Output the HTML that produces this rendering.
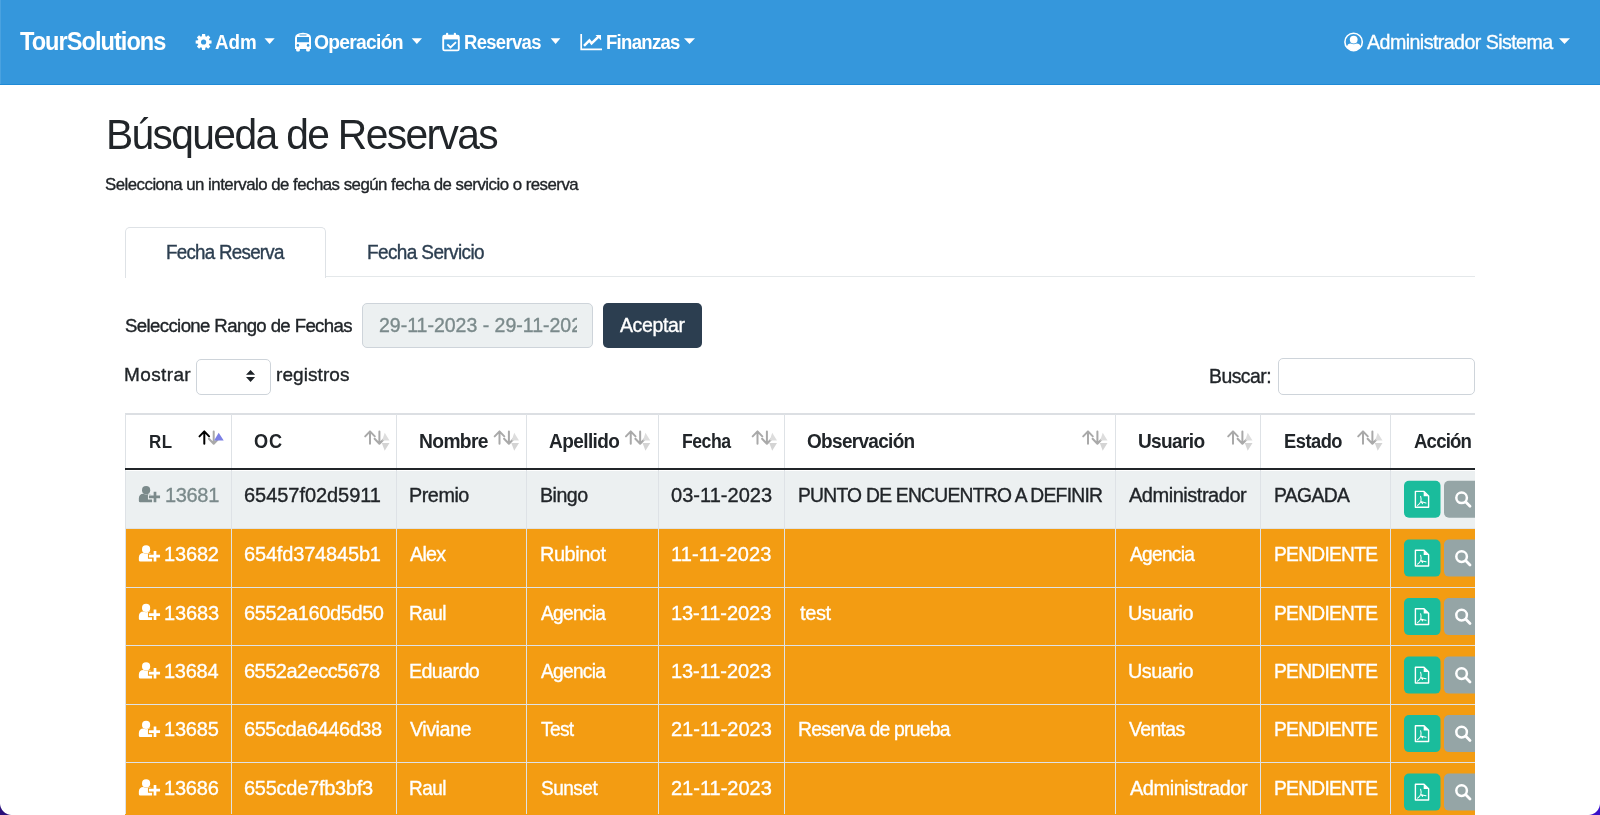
<!DOCTYPE html>
<html lang="es"><head><meta charset="utf-8"><title>Búsqueda de Reservas</title>
<style>
html,body{margin:0;padding:0}
body{width:1600px;height:815px;overflow:hidden;position:relative;background:#fff;font-family:"Liberation Sans",sans-serif}
.t{position:absolute;white-space:nowrap;line-height:1;will-change:transform}
.b{position:absolute}
</style></head><body>

<div class="b" style="left:0;top:0;width:1600px;height:84px;background:#3597dc"></div>
<div class="b" style="left:0;top:84px;width:1600px;height:1px;background:#1f8ad6"></div>
<div class="b" style="left:0;top:0;width:1px;height:84px;background:#4aa2e0"></div>
<div class="b" style="left:125px;top:276px;width:1350px;height:1px;background:#e4e8ea"></div>
<div class="b" style="left:125px;top:227px;width:199px;height:50px;border:1px solid #dee2e6;border-bottom:none;border-radius:5px 5px 0 0;background:#fff"></div>
<div class="b" style="left:362px;top:302.5px;width:229px;height:43px;border:1px solid #ced4da;border-radius:5px;background:#ecf0f1;overflow:hidden"></div>
<div class="b" style="left:603px;top:302.5px;width:98.5px;height:45.5px;border-radius:5px;background:#2c3e50"></div>
<div class="b" style="left:196px;top:358.5px;width:73px;height:34px;border:1px solid #ced4da;border-radius:5px;background:#fff"></div>
<div class="b" style="left:1278px;top:358px;width:195px;height:35px;border:1px solid #ced4da;border-radius:5px;background:#fff"></div>
<div class="b" style="left:125px;top:412px;width:1350px;height:403px;overflow:hidden">
<div class="b" style="left:0px;top:59px;width:1350px;height:57px;background:#ecf0f1"></div>
<div class="b" style="left:0px;top:117px;width:1350px;height:58px;background:#f39c12"></div>
<div class="b" style="left:0px;top:176px;width:1350px;height:57px;background:#f39c12"></div>
<div class="b" style="left:0px;top:234px;width:1350px;height:58px;background:#f39c12"></div>
<div class="b" style="left:0px;top:293px;width:1350px;height:57px;background:#f39c12"></div>
<div class="b" style="left:0px;top:351px;width:1350px;height:58px;background:#f39c12"></div>
<div class="b" style="left:0px;top:1px;width:1350px;height:2px;background:#dcdfe3"></div>
<div class="b" style="left:0px;top:2px;width:1px;height:400px;background:#dee2e6"></div>
<div class="b" style="left:106px;top:2px;width:1px;height:400px;background:#dee2e6"></div>
<div class="b" style="left:271px;top:2px;width:1px;height:400px;background:#dee2e6"></div>
<div class="b" style="left:401px;top:2px;width:1px;height:400px;background:#dee2e6"></div>
<div class="b" style="left:533px;top:2px;width:1px;height:400px;background:#dee2e6"></div>
<div class="b" style="left:659px;top:2px;width:1px;height:400px;background:#dee2e6"></div>
<div class="b" style="left:990px;top:2px;width:1px;height:400px;background:#dee2e6"></div>
<div class="b" style="left:1135px;top:2px;width:1px;height:400px;background:#dee2e6"></div>
<div class="b" style="left:1265px;top:2px;width:1px;height:400px;background:#dee2e6"></div>
<div class="b" style="left:0px;top:116px;width:1350px;height:1px;background:#dee2e6"></div>
<div class="b" style="left:0px;top:175px;width:1350px;height:1px;background:#dee2e6"></div>
<div class="b" style="left:0px;top:233px;width:1350px;height:1px;background:#dee2e6"></div>
<div class="b" style="left:0px;top:292px;width:1350px;height:1px;background:#dee2e6"></div>
<div class="b" style="left:0px;top:350px;width:1350px;height:1px;background:#dee2e6"></div>
<div class="b" style="left:0px;top:56px;width:1350px;height:2px;background:#212529"></div>
</div>
<span class="t" style="left:20.31px;top:31.107px;font-size:23.59px;font-weight:bold;color:#ffffff;letter-spacing:-0.970px;transform-origin:0 19.97px;transform:scaleY(1.100)">TourSolutions</span>
<span class="t" style="left:214.50px;top:34.071px;font-size:18.78px;font-weight:bold;color:#ffffff;letter-spacing:-0.048px;transform-origin:0 15.90px;transform:scaleY(1.065)">Adm</span>
<span class="t" style="left:313.60px;top:33.017px;font-size:19.31px;font-weight:bold;color:#ffffff;letter-spacing:-0.743px;transform-origin:0 16.35px;transform:scaleY(1.036)">Operación</span>
<span class="t" style="left:464.36px;top:34.064px;font-size:18.42px;font-weight:bold;color:#ffffff;letter-spacing:-0.633px;transform-origin:0 15.59px;transform:scaleY(1.086)">Reservas</span>
<span class="t" style="left:605.62px;top:34.063px;font-size:18.55px;font-weight:bold;color:#ffffff;letter-spacing:-0.695px;transform-origin:0 15.70px;transform:scaleY(1.078)">Finanzas</span>
<span class="t" style="left:1367.18px;top:33.007px;font-size:19.66px;font-weight:normal;color:#ffffff;letter-spacing:-0.576px;transform-origin:0 16.64px;transform:scaleY(1.007);-webkit-text-stroke:0.35px #ffffff">Administrador Sistema</span>
<span class="t" style="left:106.05px;top:115.019px;font-size:40.75px;font-weight:normal;color:#212529;letter-spacing:-1.636px;transform-origin:0 34.49px;transform:scaleY(1.031)">Búsqueda de Reservas</span>
<span class="t" style="left:105.33px;top:177.035px;font-size:16.83px;font-weight:normal;color:#212529;letter-spacing:-0.520px;transform-origin:0 14.25px;transform:scaleY(1.022);-webkit-text-stroke:0.35px #212529">Selecciona un intervalo de fechas según fecha de servicio o reserva</span>
<span class="t" style="left:166.23px;top:244.036px;font-size:18.77px;font-weight:normal;color:#2c3e50;letter-spacing:-0.735px;transform-origin:0 15.89px;transform:scaleY(1.028);-webkit-text-stroke:0.35px #2c3e50">Fecha Reserva</span>
<span class="t" style="left:366.99px;top:243.005px;font-size:18.99px;font-weight:normal;color:#2c3e50;letter-spacing:-0.611px;transform-origin:0 16.08px;transform:scaleY(1.016);-webkit-text-stroke:0.35px #2c3e50">Fecha Servicio</span>
<span class="t" style="left:124.52px;top:317.023px;font-size:18.6px;font-weight:normal;color:#212529;letter-spacing:-0.614px;transform-origin:0 15.74px;transform:scaleY(1.022);-webkit-text-stroke:0.35px #212529">Seleccione Rango de Fechas</span>
<span class="t" style="left:620.14px;top:316.015px;font-size:19.5px;font-weight:normal;color:#ffffff;letter-spacing:-0.388px;transform-origin:0 16.51px;-webkit-text-stroke:0.35px #ffffff">Aceptar</span>
<span class="t" style="left:124.34px;top:365.010px;font-size:19px;font-weight:normal;color:#212529;letter-spacing:0.381px;transform-origin:0 16.08px;-webkit-text-stroke:0.35px #212529">Mostrar</span>
<span class="t" style="left:275.57px;top:365.010px;font-size:19px;font-weight:normal;color:#212529;letter-spacing:0.072px;transform-origin:0 16.08px;-webkit-text-stroke:0.35px #212529">registros</span>
<span class="t" style="left:1208.50px;top:367.008px;font-size:19.38px;font-weight:normal;color:#212529;letter-spacing:-0.517px;transform-origin:0 16.41px;transform:scaleY(1.006);-webkit-text-stroke:0.35px #212529">Buscar:</span>
<span class="t" style="left:148.55px;top:435.141px;font-size:16.96px;font-weight:bold;color:#212529;letter-spacing:0.451px;transform-origin:0 14.36px;transform:scaleY(1.100)">RL</span>
<span class="t" style="left:254.00px;top:433.032px;font-size:18.15px;font-weight:bold;color:#212529;letter-spacing:0.954px;transform-origin:0 15.36px;transform:scaleY(1.080)">OC</span>
<span class="t" style="left:418.81px;top:432.008px;font-size:19.25px;font-weight:bold;color:#212529;letter-spacing:-0.640px;transform-origin:0 16.30px;transform:scaleY(1.018)">Nombre</span>
<span class="t" style="left:549.25px;top:432.005px;font-size:18.98px;font-weight:bold;color:#212529;letter-spacing:-0.553px;transform-origin:0 16.07px;transform:scaleY(1.033)">Apellido</span>
<span class="t" style="left:681.58px;top:434.109px;font-size:17.68px;font-weight:bold;color:#212529;letter-spacing:-0.500px;transform-origin:0 14.97px;transform:scaleY(1.100)">Fecha</span>
<span class="t" style="left:807.25px;top:432.013px;font-size:18.99px;font-weight:bold;color:#212529;letter-spacing:-0.680px;transform-origin:0 16.08px;transform:scaleY(1.032)">Observación</span>
<span class="t" style="left:1138.22px;top:432.014px;font-size:19.09px;font-weight:bold;color:#212529;letter-spacing:-0.657px;transform-origin:0 16.16px;transform:scaleY(1.027)">Usuario</span>
<span class="t" style="left:1283.76px;top:433.047px;font-size:18.31px;font-weight:bold;color:#212529;letter-spacing:-0.499px;transform-origin:0 15.50px;transform:scaleY(1.070)">Estado</span>
<div class="b" style="left:1391px;top:414px;width:84px;height:54px;overflow:hidden"><span class="t" style="left:1414.00px;top:433.055px;font-size:18.64px;font-weight:bold;color:#212529;letter-spacing:-0.839px;transform-origin:0 15.78px;transform:translate(-1391px,-414px) scaleY(1.052)">Acción</span></div>
<span class="t" style="left:164.68px;top:485.007px;font-size:20.0px;font-weight:normal;color:#7b8a8b;letter-spacing:-0.334px;transform-origin:0 16.93px;-webkit-text-stroke:0.35px #7b8a8b">13681</span>
<span class="t" style="left:243.74px;top:485.007px;font-size:20.0px;font-weight:normal;color:#212529;letter-spacing:-0.047px;transform-origin:0 16.93px;-webkit-text-stroke:0.35px #212529">65457f02d5911</span>
<span class="t" style="left:409.17px;top:486.020px;font-size:19.8px;font-weight:normal;color:#212529;letter-spacing:-0.458px;transform-origin:0 16.76px;transform:scaleY(1.010);-webkit-text-stroke:0.35px #212529">Premio</span>
<span class="t" style="left:539.70px;top:486.026px;font-size:19.61px;font-weight:normal;color:#212529;letter-spacing:-0.511px;transform-origin:0 16.60px;transform:scaleY(1.020);-webkit-text-stroke:0.35px #212529">Bingo</span>
<span class="t" style="left:671.00px;top:485.007px;font-size:20.0px;font-weight:normal;color:#212529;letter-spacing:0.034px;transform-origin:0 16.93px;-webkit-text-stroke:0.35px #212529">03-11-2023</span>
<span class="t" style="left:797.79px;top:486.016px;font-size:19.27px;font-weight:normal;color:#212529;letter-spacing:-0.746px;transform-origin:0 16.31px;transform:scaleY(1.038);-webkit-text-stroke:0.35px #212529">PUNTO DE ENCUENTRO A DEFINIR</span>
<span class="t" style="left:1129.40px;top:485.007px;font-size:20.0px;font-weight:normal;color:#212529;letter-spacing:-0.471px;transform-origin:0 16.93px;-webkit-text-stroke:0.35px #212529">Administrador</span>
<span class="t" style="left:1274.01px;top:486.023px;font-size:19.34px;font-weight:normal;color:#212529;letter-spacing:-0.651px;transform-origin:0 16.37px;transform:scaleY(1.034);-webkit-text-stroke:0.35px #212529">PAGADA</span>
<span class="t" style="left:164.35px;top:544.007px;font-size:20.0px;font-weight:normal;color:#ffffff;letter-spacing:-0.164px;transform-origin:0 16.93px;-webkit-text-stroke:0.35px #ffffff">13682</span>
<span class="t" style="left:243.76px;top:544.007px;font-size:20.0px;font-weight:normal;color:#ffffff;letter-spacing:-0.170px;transform-origin:0 16.93px;-webkit-text-stroke:0.35px #ffffff">654fd374845b1</span>
<span class="t" style="left:410.43px;top:545.014px;font-size:19.64px;font-weight:normal;color:#ffffff;letter-spacing:-0.666px;transform-origin:0 16.63px;transform:scaleY(1.018);-webkit-text-stroke:0.35px #ffffff">Alex</span>
<span class="t" style="left:539.80px;top:545.011px;font-size:19.94px;font-weight:normal;color:#ffffff;letter-spacing:-0.461px;transform-origin:0 16.88px;-webkit-text-stroke:0.35px #ffffff">Rubinot</span>
<span class="t" style="left:670.85px;top:544.007px;font-size:20.0px;font-weight:normal;color:#ffffff;letter-spacing:0.103px;transform-origin:0 16.93px;-webkit-text-stroke:0.35px #ffffff">11-11-2023</span>
<span class="t" style="left:1129.73px;top:545.022px;font-size:19.12px;font-weight:normal;color:#ffffff;letter-spacing:-0.690px;transform-origin:0 16.19px;transform:scaleY(1.046);-webkit-text-stroke:0.35px #ffffff">Agencia</span>
<span class="t" style="left:1274.22px;top:545.024px;font-size:19.22px;font-weight:normal;color:#ffffff;letter-spacing:-0.741px;transform-origin:0 16.27px;transform:scaleY(1.041);-webkit-text-stroke:0.35px #ffffff">PENDIENTE</span>
<span class="t" style="left:164.35px;top:603.007px;font-size:20.0px;font-weight:normal;color:#ffffff;letter-spacing:-0.114px;transform-origin:0 16.93px;-webkit-text-stroke:0.35px #ffffff">13683</span>
<span class="t" style="left:243.76px;top:603.007px;font-size:20.0px;font-weight:normal;color:#ffffff;letter-spacing:-0.384px;transform-origin:0 16.93px;-webkit-text-stroke:0.35px #ffffff">6552a160d5d50</span>
<span class="t" style="left:409.02px;top:604.011px;font-size:18.98px;font-weight:normal;color:#ffffff;letter-spacing:-0.480px;transform-origin:0 16.07px;transform:scaleY(1.054);-webkit-text-stroke:0.35px #ffffff">Raul</span>
<span class="t" style="left:540.98px;top:604.022px;font-size:19.12px;font-weight:normal;color:#ffffff;letter-spacing:-0.690px;transform-origin:0 16.19px;transform:scaleY(1.046);-webkit-text-stroke:0.35px #ffffff">Agencia</span>
<span class="t" style="left:670.85px;top:603.007px;font-size:20.0px;font-weight:normal;color:#ffffff;letter-spacing:-0.061px;transform-origin:0 16.93px;-webkit-text-stroke:0.35px #ffffff">13-11-2023</span>
<span class="t" style="left:799.62px;top:603.007px;font-size:20.0px;font-weight:normal;color:#ffffff;letter-spacing:-0.383px;transform-origin:0 16.93px;-webkit-text-stroke:0.35px #ffffff">test</span>
<span class="t" style="left:1128.36px;top:604.019px;font-size:19.85px;font-weight:normal;color:#ffffff;letter-spacing:-0.493px;transform-origin:0 16.80px;transform:scaleY(1.008);-webkit-text-stroke:0.35px #ffffff">Usuario</span>
<span class="t" style="left:1274.22px;top:604.024px;font-size:19.22px;font-weight:normal;color:#ffffff;letter-spacing:-0.741px;transform-origin:0 16.27px;transform:scaleY(1.041);-webkit-text-stroke:0.35px #ffffff">PENDIENTE</span>
<span class="t" style="left:164.35px;top:661.007px;font-size:20.0px;font-weight:normal;color:#ffffff;letter-spacing:-0.253px;transform-origin:0 16.93px;-webkit-text-stroke:0.35px #ffffff">13684</span>
<span class="t" style="left:243.76px;top:661.007px;font-size:20.0px;font-weight:normal;color:#ffffff;letter-spacing:-0.510px;transform-origin:0 16.93px;-webkit-text-stroke:0.35px #ffffff">6552a2ecc5678</span>
<span class="t" style="left:409.36px;top:662.017px;font-size:19.72px;font-weight:normal;color:#ffffff;letter-spacing:-0.616px;transform-origin:0 16.69px;transform:scaleY(1.014);-webkit-text-stroke:0.35px #ffffff">Eduardo</span>
<span class="t" style="left:540.98px;top:662.022px;font-size:19.12px;font-weight:normal;color:#ffffff;letter-spacing:-0.690px;transform-origin:0 16.19px;transform:scaleY(1.046);-webkit-text-stroke:0.35px #ffffff">Agencia</span>
<span class="t" style="left:670.85px;top:661.007px;font-size:20.0px;font-weight:normal;color:#ffffff;letter-spacing:-0.061px;transform-origin:0 16.93px;-webkit-text-stroke:0.35px #ffffff">13-11-2023</span>
<span class="t" style="left:1128.36px;top:662.019px;font-size:19.85px;font-weight:normal;color:#ffffff;letter-spacing:-0.493px;transform-origin:0 16.80px;transform:scaleY(1.008);-webkit-text-stroke:0.35px #ffffff">Usuario</span>
<span class="t" style="left:1274.22px;top:662.024px;font-size:19.22px;font-weight:normal;color:#ffffff;letter-spacing:-0.741px;transform-origin:0 16.27px;transform:scaleY(1.041);-webkit-text-stroke:0.35px #ffffff">PENDIENTE</span>
<span class="t" style="left:164.35px;top:719.007px;font-size:20.0px;font-weight:normal;color:#ffffff;letter-spacing:-0.192px;transform-origin:0 16.93px;-webkit-text-stroke:0.35px #ffffff">13685</span>
<span class="t" style="left:243.76px;top:719.007px;font-size:20.0px;font-weight:normal;color:#ffffff;letter-spacing:-0.447px;transform-origin:0 16.93px;-webkit-text-stroke:0.35px #ffffff">655cda6446d38</span>
<span class="t" style="left:410.18px;top:720.015px;font-size:19.79px;font-weight:normal;color:#ffffff;letter-spacing:-0.519px;transform-origin:0 16.75px;transform:scaleY(1.011);-webkit-text-stroke:0.35px #ffffff">Viviane</span>
<span class="t" style="left:541.04px;top:720.016px;font-size:19.23px;font-weight:normal;color:#ffffff;letter-spacing:-0.700px;transform-origin:0 16.28px;transform:scaleY(1.040);-webkit-text-stroke:0.35px #ffffff">Test</span>
<span class="t" style="left:671.00px;top:719.007px;font-size:20.0px;font-weight:normal;color:#ffffff;letter-spacing:0.001px;transform-origin:0 16.93px;-webkit-text-stroke:0.35px #ffffff">21-11-2023</span>
<span class="t" style="left:797.95px;top:720.016px;font-size:19.35px;font-weight:normal;color:#ffffff;letter-spacing:-0.753px;transform-origin:0 16.38px;transform:scaleY(1.034);-webkit-text-stroke:0.35px #ffffff">Reserva de prueba</span>
<span class="t" style="left:1129.44px;top:720.015px;font-size:19.5px;font-weight:normal;color:#ffffff;letter-spacing:-0.677px;transform-origin:0 16.51px;transform:scaleY(1.026);-webkit-text-stroke:0.35px #ffffff">Ventas</span>
<span class="t" style="left:1274.22px;top:720.024px;font-size:19.22px;font-weight:normal;color:#ffffff;letter-spacing:-0.741px;transform-origin:0 16.27px;transform:scaleY(1.041);-webkit-text-stroke:0.35px #ffffff">PENDIENTE</span>
<span class="t" style="left:164.35px;top:778.007px;font-size:20.0px;font-weight:normal;color:#ffffff;letter-spacing:-0.202px;transform-origin:0 16.93px;-webkit-text-stroke:0.35px #ffffff">13686</span>
<span class="t" style="left:243.76px;top:778.007px;font-size:20.0px;font-weight:normal;color:#ffffff;letter-spacing:-0.260px;transform-origin:0 16.93px;-webkit-text-stroke:0.35px #ffffff">655cde7fb3bf3</span>
<span class="t" style="left:409.02px;top:779.011px;font-size:18.98px;font-weight:normal;color:#ffffff;letter-spacing:-0.480px;transform-origin:0 16.07px;transform:scaleY(1.054);-webkit-text-stroke:0.35px #ffffff">Raul</span>
<span class="t" style="left:540.56px;top:779.011px;font-size:19.0px;font-weight:normal;color:#ffffff;letter-spacing:-0.496px;transform-origin:0 16.08px;transform:scaleY(1.053);-webkit-text-stroke:0.35px #ffffff">Sunset</span>
<span class="t" style="left:671.00px;top:778.007px;font-size:20.0px;font-weight:normal;color:#ffffff;letter-spacing:0.001px;transform-origin:0 16.93px;-webkit-text-stroke:0.35px #ffffff">21-11-2023</span>
<span class="t" style="left:1129.58px;top:778.007px;font-size:20.0px;font-weight:normal;color:#ffffff;letter-spacing:-0.480px;transform-origin:0 16.93px;-webkit-text-stroke:0.35px #ffffff">Administrador</span>
<span class="t" style="left:1274.22px;top:779.024px;font-size:19.22px;font-weight:normal;color:#ffffff;letter-spacing:-0.741px;transform-origin:0 16.27px;transform:scaleY(1.041);-webkit-text-stroke:0.35px #ffffff">PENDIENTE</span>
<div class="b" style="left:363px;top:303px;width:214px;height:43px;overflow:hidden"><span class="t" style="left:378.60px;top:316.015px;font-size:19.5px;font-weight:normal;color:#7b8a8b;letter-spacing:-0.004px;transform-origin:0 16.51px;-webkit-text-stroke:0.35px #7b8a8b;transform:translate(-363px,-303px) ">29-11-2023 - 29-11-2023</span></div>
<svg class="b" style="left:0;top:0" width="1600" height="815" viewBox="0 0 1600 815">
<defs><clipPath id="tbl"><path d="M0 0 H1600 V412 H1475 V815 H0 Z"/></clipPath></defs><g clip-path="url(#tbl)">
<path d="M264.5 38.2 L274.7 38.2 L269.6 43.9 Z" fill="#ffffff"/>
<path d="M411.7 38.2 L422 38.2 L416.85 43.9 Z" fill="#ffffff"/>
<path d="M550.75 38.2 L560.4 38.2 L555.575 43.9 Z" fill="#ffffff"/>
<path d="M684 38.2 L695 38.2 L689.5 43.9 Z" fill="#ffffff"/>
<path d="M1559 38.2 L1570 38.2 L1564.5 43.9 Z" fill="#ffffff"/>
<path d="M209.33 40.23 L211.55 40.47 L211.55 43.53 L209.33 43.77 L208.91 44.80 L210.31 46.54 L208.14 48.71 L206.40 47.31 L205.37 47.73 L205.13 49.95 L202.07 49.95 L201.83 47.73 L200.80 47.31 L199.06 48.71 L196.89 46.54 L198.29 44.80 L197.87 43.77 L195.65 43.53 L195.65 40.47 L197.87 40.23 L198.29 39.20 L196.89 37.46 L199.06 35.29 L200.80 36.69 L201.83 36.27 L202.07 34.05 L205.13 34.05 L205.37 36.27 L206.40 36.69 L208.14 35.29 L210.31 37.46 L208.91 39.20 Z M206.2 42.0 A2.6 2.6 0 1 0 201.0 42.0 A2.6 2.6 0 1 0 206.2 42.0 Z" fill="#ffffff" fill-rule="evenodd"/>
<path d="M295 49 L295 38 Q295 33 303 32.8 Q311 33 311 38 L311 49 Z M297 37 L309 37 L309 42.2 L297 42.2 Z M299.5 34.6 L306.5 34.6 L306.5 35.5 L299.5 35.5 Z" fill="#ffffff" fill-rule="evenodd"/>
<circle cx="297.9" cy="45.4" r="1.3" fill="#3597dc"/><circle cx="308.1" cy="45.4" r="1.3" fill="#3597dc"/>
<rect x="296.2" y="48" width="3.6" height="3.4" rx="1.2" fill="#ffffff"/><rect x="306.2" y="48" width="3.6" height="3.4" rx="1.2" fill="#ffffff"/>
<rect x="443.2" y="35.6" width="15.6" height="14.8" rx="1.5" fill="none" stroke="#ffffff" stroke-width="1.9"/>
<rect x="443.2" y="35.6" width="15.6" height="3.8" fill="#ffffff"/>
<rect x="446" y="32.7" width="2.2" height="4.5" rx="1" fill="#ffffff"/><rect x="453.8" y="32.7" width="2.2" height="4.5" rx="1" fill="#ffffff"/>
<path d="M447.3 44.4 L450.5 47.5 L456 42.1" fill="none" stroke="#ffffff" stroke-width="1.9"/>
<path d="M581.2 34 L581.2 49.4 L602 49.4" fill="none" stroke="#ffffff" stroke-width="1.7"/>
<path d="M584 45.8 L589.4 40.4 L591.6 43.4 L599.6 35.6" fill="none" stroke="#ffffff" stroke-width="2.5"/>
<path d="M595.5 35 L601 35 L601 40.2 Z" fill="#ffffff"/>
<circle cx="1353.6" cy="41.9" r="8.7" fill="none" stroke="#ffffff" stroke-width="1.6"/>
<defs><clipPath id="uc"><circle cx="1353.6" cy="41.9" r="8.5"/></clipPath></defs>
<circle cx="1353.7" cy="39.6" r="3.9" fill="#ffffff"/>
<path clip-path="url(#uc)" d="M1347 52 L1347 46.5 Q1347.5 43.6 1350.6 43.6 Q1353.7 44.8 1356.8 43.6 Q1360 43.6 1360.5 46.5 L1360.5 52 Z" fill="#ffffff"/>
<path d="M204.3 443.8 L204.3 431.6 M199.5 436.4 L204.3 431.4 L209.10000000000002 436.4" fill="none" stroke="#000000" stroke-width="2" stroke-linecap="round" stroke-linejoin="round"/>
<path d="M213.70000000000002 431.4 L213.70000000000002 443.6 M208.9 438.8 L213.70000000000002 443.8 L218.50000000000003 438.8" fill="none" stroke="#a9a9a9" stroke-width="2" stroke-linecap="round" stroke-linejoin="round"/>
<path d="M218.70000000000002 432.7 L223.70000000000002 440.5 L214.10000000000002 440.5 Z" fill="#7c80e4"/>
<path d="M370.0 443.8 L370.0 431.6 M365.2 436.4 L370.0 431.4 L374.8 436.4" fill="none" stroke="#a9a9a9" stroke-width="2" stroke-linecap="round" stroke-linejoin="round"/>
<path d="M379.4 431.4 L379.4 443.6 M374.59999999999997 438.8 L379.4 443.8 L384.2 438.8" fill="none" stroke="#a9a9a9" stroke-width="2" stroke-linecap="round" stroke-linejoin="round"/>
<path d="M384.7 432.7 L389.5 440.5 L382.2 440.5 Z" fill="#dddddd"/>
<path d="M381.8 443 L389.5 443 L384.7 450.8 Z" fill="#d4d4d4"/>
<path d="M499.5 443.8 L499.5 431.6 M494.7 436.4 L499.5 431.4 L504.3 436.4" fill="none" stroke="#a9a9a9" stroke-width="2" stroke-linecap="round" stroke-linejoin="round"/>
<path d="M508.9 431.4 L508.9 443.6 M504.09999999999997 438.8 L508.9 443.8 L513.6999999999999 438.8" fill="none" stroke="#a9a9a9" stroke-width="2" stroke-linecap="round" stroke-linejoin="round"/>
<path d="M514.2 432.7 L519.0 440.5 L511.7 440.5 Z" fill="#dddddd"/>
<path d="M511.3 443 L519.0 443 L514.2 450.8 Z" fill="#d4d4d4"/>
<path d="M630.75 443.8 L630.75 431.6 M625.95 436.4 L630.75 431.4 L635.55 436.4" fill="none" stroke="#a9a9a9" stroke-width="2" stroke-linecap="round" stroke-linejoin="round"/>
<path d="M640.15 431.4 L640.15 443.6 M635.35 438.8 L640.15 443.8 L644.9499999999999 438.8" fill="none" stroke="#a9a9a9" stroke-width="2" stroke-linecap="round" stroke-linejoin="round"/>
<path d="M645.45 432.7 L650.25 440.5 L642.95 440.5 Z" fill="#dddddd"/>
<path d="M642.55 443 L650.25 443 L645.45 450.8 Z" fill="#d4d4d4"/>
<path d="M757.5 443.8 L757.5 431.6 M752.7 436.4 L757.5 431.4 L762.3 436.4" fill="none" stroke="#a9a9a9" stroke-width="2" stroke-linecap="round" stroke-linejoin="round"/>
<path d="M766.9 431.4 L766.9 443.6 M762.1 438.8 L766.9 443.8 L771.6999999999999 438.8" fill="none" stroke="#a9a9a9" stroke-width="2" stroke-linecap="round" stroke-linejoin="round"/>
<path d="M772.2 432.7 L777.0 440.5 L769.7 440.5 Z" fill="#dddddd"/>
<path d="M769.3 443 L777.0 443 L772.2 450.8 Z" fill="#d4d4d4"/>
<path d="M1088.0 443.8 L1088.0 431.6 M1083.2 436.4 L1088.0 431.4 L1092.8 436.4" fill="none" stroke="#a9a9a9" stroke-width="2" stroke-linecap="round" stroke-linejoin="round"/>
<path d="M1097.4 431.4 L1097.4 443.6 M1092.6000000000001 438.8 L1097.4 443.8 L1102.2 438.8" fill="none" stroke="#a9a9a9" stroke-width="2" stroke-linecap="round" stroke-linejoin="round"/>
<path d="M1102.7 432.7 L1107.5 440.5 L1100.2 440.5 Z" fill="#dddddd"/>
<path d="M1099.8 443 L1107.5 443 L1102.7 450.8 Z" fill="#d4d4d4"/>
<path d="M1233.0 443.8 L1233.0 431.6 M1228.2 436.4 L1233.0 431.4 L1237.8 436.4" fill="none" stroke="#a9a9a9" stroke-width="2" stroke-linecap="round" stroke-linejoin="round"/>
<path d="M1242.4 431.4 L1242.4 443.6 M1237.6000000000001 438.8 L1242.4 443.8 L1247.2 438.8" fill="none" stroke="#a9a9a9" stroke-width="2" stroke-linecap="round" stroke-linejoin="round"/>
<path d="M1247.7 432.7 L1252.5 440.5 L1245.2 440.5 Z" fill="#dddddd"/>
<path d="M1244.8 443 L1252.5 443 L1247.7 450.8 Z" fill="#d4d4d4"/>
<path d="M1363.0 443.8 L1363.0 431.6 M1358.2 436.4 L1363.0 431.4 L1367.8 436.4" fill="none" stroke="#a9a9a9" stroke-width="2" stroke-linecap="round" stroke-linejoin="round"/>
<path d="M1372.4 431.4 L1372.4 443.6 M1367.6000000000001 438.8 L1372.4 443.8 L1377.2 438.8" fill="none" stroke="#a9a9a9" stroke-width="2" stroke-linecap="round" stroke-linejoin="round"/>
<path d="M1377.7 432.7 L1382.5 440.5 L1375.2 440.5 Z" fill="#dddddd"/>
<path d="M1374.8 443 L1382.5 443 L1377.7 450.8 Z" fill="#d4d4d4"/>
<circle cx="146.1" cy="490.15" r="4.1" fill="#7b8a8b"/>
<path d="M138.85 500.95 Q138.85 502.34999999999997 140.25 502.34999999999997 L152.15 502.34999999999997 L152.15 495.65 Q150.95 493.75 148.95 493.75 Q146.1 495.15 143.25 493.75 Q139.15 493.95 138.85 498.15 Z" fill="#7b8a8b"/>
<path d="M155.0 490.75 L155.0 503.34999999999997 M147.95 496.95 L160.95 496.95" stroke="#ecf0f1" stroke-width="5.2" />
<path d="M155.0 491.75 L155.0 502.34999999999997 M148.95 496.95 L160.05 496.95" stroke="#7b8a8b" stroke-width="2.7" />
<circle cx="146.1" cy="549.4" r="4.1" fill="#ffffff"/>
<path d="M138.85 560.1999999999999 Q138.85 561.6 140.25 561.6 L152.15 561.6 L152.15 554.9 Q150.95 553.0 148.95 553.0 Q146.1 554.4 143.25 553.0 Q139.15 553.1999999999999 138.85 557.4 Z" fill="#ffffff"/>
<path d="M155.0 550.0 L155.0 562.6 M147.95 556.1999999999999 L160.95 556.1999999999999" stroke="#f39c12" stroke-width="5.2" />
<path d="M155.0 551.0 L155.0 561.6 M148.95 556.1999999999999 L160.05 556.1999999999999" stroke="#ffffff" stroke-width="2.7" />
<circle cx="146.1" cy="607.9" r="4.1" fill="#ffffff"/>
<path d="M138.85 618.6999999999999 Q138.85 620.1 140.25 620.1 L152.15 620.1 L152.15 613.4 Q150.95 611.5 148.95 611.5 Q146.1 612.9 143.25 611.5 Q139.15 611.6999999999999 138.85 615.9 Z" fill="#ffffff"/>
<path d="M155.0 608.5 L155.0 621.1 M147.95 614.6999999999999 L160.95 614.6999999999999" stroke="#f39c12" stroke-width="5.2" />
<path d="M155.0 609.5 L155.0 620.1 M148.95 614.6999999999999 L160.05 614.6999999999999" stroke="#ffffff" stroke-width="2.7" />
<circle cx="146.1" cy="666.4" r="4.1" fill="#ffffff"/>
<path d="M138.85 677.1999999999999 Q138.85 678.6 140.25 678.6 L152.15 678.6 L152.15 671.9 Q150.95 670.0 148.95 670.0 Q146.1 671.4 143.25 670.0 Q139.15 670.1999999999999 138.85 674.4 Z" fill="#ffffff"/>
<path d="M155.0 667.0 L155.0 679.6 M147.95 673.1999999999999 L160.95 673.1999999999999" stroke="#f39c12" stroke-width="5.2" />
<path d="M155.0 668.0 L155.0 678.6 M148.95 673.1999999999999 L160.05 673.1999999999999" stroke="#ffffff" stroke-width="2.7" />
<circle cx="146.1" cy="724.9" r="4.1" fill="#ffffff"/>
<path d="M138.85 735.6999999999999 Q138.85 737.1 140.25 737.1 L152.15 737.1 L152.15 730.4 Q150.95 728.5 148.95 728.5 Q146.1 729.9 143.25 728.5 Q139.15 728.6999999999999 138.85 732.9 Z" fill="#ffffff"/>
<path d="M155.0 725.5 L155.0 738.1 M147.95 731.6999999999999 L160.95 731.6999999999999" stroke="#f39c12" stroke-width="5.2" />
<path d="M155.0 726.5 L155.0 737.1 M148.95 731.6999999999999 L160.05 731.6999999999999" stroke="#ffffff" stroke-width="2.7" />
<circle cx="146.1" cy="783.4" r="4.1" fill="#ffffff"/>
<path d="M138.85 794.1999999999999 Q138.85 795.6 140.25 795.6 L152.15 795.6 L152.15 788.9 Q150.95 787.0 148.95 787.0 Q146.1 788.4 143.25 787.0 Q139.15 787.1999999999999 138.85 791.4 Z" fill="#ffffff"/>
<path d="M155.0 784.0 L155.0 796.6 M147.95 790.1999999999999 L160.95 790.1999999999999" stroke="#f39c12" stroke-width="5.2" />
<path d="M155.0 785.0 L155.0 795.6 M148.95 790.1999999999999 L160.05 790.1999999999999" stroke="#ffffff" stroke-width="2.7" />
<rect x="1404" y="480.8" width="36.5" height="37" rx="5" fill="#1abc9c"/>
<rect x="1444" y="480.8" width="40" height="37" rx="5" fill="#95a5a6"/>
<path d="M1415.4 491.40000000000003 L1424.0 491.40000000000003 L1428.6000000000001 496.00000000000006 L1428.6000000000001 507.20000000000005 L1415.4 507.20000000000005 Z" fill="none" stroke="#ffffff" stroke-width="1.4" stroke-linejoin="round"/>
<path d="M1423.7 491.40000000000003 L1423.7 496.3 L1428.6000000000001 496.3 Z" fill="#ffffff"/>
<path d="M1420.6000000000001 496.40000000000003 Q1421.6000000000001 499.40000000000003 1420.8000000000002 501.6 Q1419.8000000000002 503.8 1417.6000000000001 505.40000000000003 M1420.8000000000002 501.6 Q1423.4 502.20000000000005 1426.0 503.00000000000006 M1420.8000000000002 501.6 L1422.6000000000001 503.6" fill="none" stroke="#ffffff" stroke-width="1.05" stroke-linecap="round"/>
<circle cx="1461.6" cy="497.8" r="5.3" fill="none" stroke="#ffffff" stroke-width="2.5"/>
<path d="M1465.8 502.0 L1470.0 506.2" stroke="#ffffff" stroke-width="2.8" stroke-linecap="round"/>
<rect x="1404" y="539.6" width="36.5" height="37" rx="5" fill="#1abc9c"/>
<rect x="1444" y="539.6" width="40" height="37" rx="5" fill="#95a5a6"/>
<path d="M1415.4 550.2 L1424.0 550.2 L1428.6000000000001 554.8000000000001 L1428.6000000000001 566.0 L1415.4 566.0 Z" fill="none" stroke="#ffffff" stroke-width="1.4" stroke-linejoin="round"/>
<path d="M1423.7 550.2 L1423.7 555.1 L1428.6000000000001 555.1 Z" fill="#ffffff"/>
<path d="M1420.6000000000001 555.2 Q1421.6000000000001 558.2 1420.8000000000002 560.4000000000001 Q1419.8000000000002 562.6 1417.6000000000001 564.2 M1420.8000000000002 560.4000000000001 Q1423.4 561.0 1426.0 561.8000000000001 M1420.8000000000002 560.4000000000001 L1422.6000000000001 562.4000000000001" fill="none" stroke="#ffffff" stroke-width="1.05" stroke-linecap="round"/>
<circle cx="1461.6" cy="556.6" r="5.3" fill="none" stroke="#ffffff" stroke-width="2.5"/>
<path d="M1465.8 560.8000000000001 L1470.0 565.0" stroke="#ffffff" stroke-width="2.8" stroke-linecap="round"/>
<rect x="1404" y="598.1" width="36.5" height="37" rx="5" fill="#1abc9c"/>
<rect x="1444" y="598.1" width="40" height="37" rx="5" fill="#95a5a6"/>
<path d="M1415.4 608.7 L1424.0 608.7 L1428.6000000000001 613.3000000000001 L1428.6000000000001 624.5 L1415.4 624.5 Z" fill="none" stroke="#ffffff" stroke-width="1.4" stroke-linejoin="round"/>
<path d="M1423.7 608.7 L1423.7 613.6 L1428.6000000000001 613.6 Z" fill="#ffffff"/>
<path d="M1420.6000000000001 613.7 Q1421.6000000000001 616.7 1420.8000000000002 618.9000000000001 Q1419.8000000000002 621.1 1417.6000000000001 622.7 M1420.8000000000002 618.9000000000001 Q1423.4 619.5 1426.0 620.3000000000001 M1420.8000000000002 618.9000000000001 L1422.6000000000001 620.9000000000001" fill="none" stroke="#ffffff" stroke-width="1.05" stroke-linecap="round"/>
<circle cx="1461.6" cy="615.1" r="5.3" fill="none" stroke="#ffffff" stroke-width="2.5"/>
<path d="M1465.8 619.3000000000001 L1470.0 623.5" stroke="#ffffff" stroke-width="2.8" stroke-linecap="round"/>
<rect x="1404" y="656.6" width="36.5" height="37" rx="5" fill="#1abc9c"/>
<rect x="1444" y="656.6" width="40" height="37" rx="5" fill="#95a5a6"/>
<path d="M1415.4 667.2 L1424.0 667.2 L1428.6000000000001 671.8000000000001 L1428.6000000000001 683.0 L1415.4 683.0 Z" fill="none" stroke="#ffffff" stroke-width="1.4" stroke-linejoin="round"/>
<path d="M1423.7 667.2 L1423.7 672.1 L1428.6000000000001 672.1 Z" fill="#ffffff"/>
<path d="M1420.6000000000001 672.2 Q1421.6000000000001 675.2 1420.8000000000002 677.4000000000001 Q1419.8000000000002 679.6 1417.6000000000001 681.2 M1420.8000000000002 677.4000000000001 Q1423.4 678.0 1426.0 678.8000000000001 M1420.8000000000002 677.4000000000001 L1422.6000000000001 679.4000000000001" fill="none" stroke="#ffffff" stroke-width="1.05" stroke-linecap="round"/>
<circle cx="1461.6" cy="673.6" r="5.3" fill="none" stroke="#ffffff" stroke-width="2.5"/>
<path d="M1465.8 677.8000000000001 L1470.0 682.0" stroke="#ffffff" stroke-width="2.8" stroke-linecap="round"/>
<rect x="1404" y="715.1" width="36.5" height="37" rx="5" fill="#1abc9c"/>
<rect x="1444" y="715.1" width="40" height="37" rx="5" fill="#95a5a6"/>
<path d="M1415.4 725.7 L1424.0 725.7 L1428.6000000000001 730.3000000000001 L1428.6000000000001 741.5 L1415.4 741.5 Z" fill="none" stroke="#ffffff" stroke-width="1.4" stroke-linejoin="round"/>
<path d="M1423.7 725.7 L1423.7 730.6 L1428.6000000000001 730.6 Z" fill="#ffffff"/>
<path d="M1420.6000000000001 730.7 Q1421.6000000000001 733.7 1420.8000000000002 735.9000000000001 Q1419.8000000000002 738.1 1417.6000000000001 739.7 M1420.8000000000002 735.9000000000001 Q1423.4 736.5 1426.0 737.3000000000001 M1420.8000000000002 735.9000000000001 L1422.6000000000001 737.9000000000001" fill="none" stroke="#ffffff" stroke-width="1.05" stroke-linecap="round"/>
<circle cx="1461.6" cy="732.1" r="5.3" fill="none" stroke="#ffffff" stroke-width="2.5"/>
<path d="M1465.8 736.3000000000001 L1470.0 740.5" stroke="#ffffff" stroke-width="2.8" stroke-linecap="round"/>
<rect x="1404" y="773.6" width="36.5" height="37" rx="5" fill="#1abc9c"/>
<rect x="1444" y="773.6" width="40" height="37" rx="5" fill="#95a5a6"/>
<path d="M1415.4 784.2 L1424.0 784.2 L1428.6000000000001 788.8000000000001 L1428.6000000000001 800.0 L1415.4 800.0 Z" fill="none" stroke="#ffffff" stroke-width="1.4" stroke-linejoin="round"/>
<path d="M1423.7 784.2 L1423.7 789.1 L1428.6000000000001 789.1 Z" fill="#ffffff"/>
<path d="M1420.6000000000001 789.2 Q1421.6000000000001 792.2 1420.8000000000002 794.4000000000001 Q1419.8000000000002 796.6 1417.6000000000001 798.2 M1420.8000000000002 794.4000000000001 Q1423.4 795.0 1426.0 795.8000000000001 M1420.8000000000002 794.4000000000001 L1422.6000000000001 796.4000000000001" fill="none" stroke="#ffffff" stroke-width="1.05" stroke-linecap="round"/>
<circle cx="1461.6" cy="790.6" r="5.3" fill="none" stroke="#ffffff" stroke-width="2.5"/>
<path d="M1465.8 794.8000000000001 L1470.0 799.0" stroke="#ffffff" stroke-width="2.8" stroke-linecap="round"/>
<path d="M246 374.7 L255.1 374.7 L250.55 369.9 Z M246 377.1 L255.1 377.1 L250.55 382.1 Z" fill="#1e2328"/>
</g></svg>
<div class="b" style="left:0;top:803px;width:12px;height:12px;background:radial-gradient(circle at 12px 0, #fff 11.5px, #2a0f7a 12.5px)"></div>
<div class="b" style="left:1588px;top:803px;width:12px;height:12px;background:radial-gradient(circle at 0 0, #fff 11.5px, #3a10c9 12.5px)"></div>
</body></html>
